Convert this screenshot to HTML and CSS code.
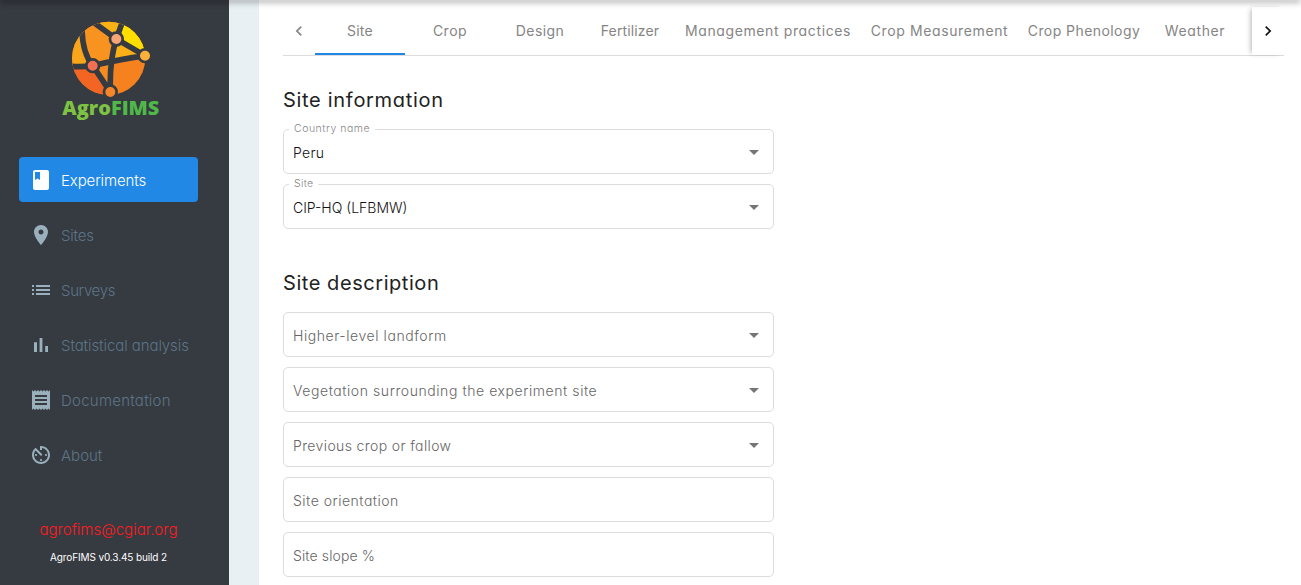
FILE: index.html
```html
<!DOCTYPE html>
<html lang="en">
<head>
<meta charset="utf-8">
<title>AgroFIMS</title>
<link rel="stylesheet" href="styles.css">
</head>
<body>
<div class="topbar-shadow"></div>
<div class="app">
  <aside class="sidebar">
    <svg class="logo" viewBox="0 0 360 345" width="120" height="115">
      <defs><clipPath id="globe"><circle cx="176" cy="145" r="110"/></clipPath></defs>
      <g clip-path="url(#globe)">
        <rect width="360" height="345" fill="#f5821f"/>
        <path d="M128 167L90 60L128 30L199 87L181 156Z" fill="#f7931e"/>
        <path d="M128 30L199 87L222 20Z" fill="#f9b215"/>
        <path d="M199 87L222 20L320 30L285 137Z" fill="#ffde00"/>
        <path d="M199 87L285 137L181 156Z" fill="#fbb017"/>
        <path d="M128 167L90 60L30 60V167Z" fill="#faa61a"/>
        <path d="M128 167H30V280H200L181 246Z" fill="#f26522"/>
        <path d="M128 167L181 156L181 246Z" fill="#f68b1f"/>
        <path d="M128 35L199 87L220 28M199 87L285 137Q200 150 128 167L181 246Q178 150 199 87M128 167Q98 130 96 60M128 167Q95 172 50 168" fill="none" stroke="#363a41" stroke-width="17"/>
      </g>
      <g stroke="#363a41" stroke-width="8">
        <circle cx="199" cy="87" r="19" fill="#f7a576"/>
        <circle cx="285" cy="137" r="19" fill="#fbb03b"/>
        <circle cx="128" cy="167" r="19" fill="#f26f52"/>
        <circle cx="181" cy="246" r="19" fill="#f5862a"/>
      </g>
      <text class="logo-text" x="37" y="314" textLength="291" lengthAdjust="spacingAndGlyphs"><tspan fill="#7dc242">Agro</tspan><tspan fill="#50b848">FIMS</tspan></text>
    </svg>
    <nav class="menu">
      <a class="item active"><svg viewBox="0 0 24 24"><path d="M18 2H6c-1.100 0-2 .9-2 2v16c0 1.100.9 2 2 2h12c1.100 0 2-.9 2-2V4c0-1.100-.9-2-2-2zM6 4h5v8l-2.500-1.500L6 12V4z"/></svg><span class="w-exp">Experiments</span></a>
      <a class="item"><svg viewBox="0 0 24 24"><path d="M12 2C8.130 2 5 5.130 5 9c0 5.250 7 13 7 13s7-7.750 7-13c0-3.870-3.130-7-7-7zm0 9.500c-1.380 0-2.500-1.120-2.500-2.500s1.120-2.500 2.500-2.500 2.500 1.120 2.500 2.500-1.120 2.500-2.500 2.500z"/></svg><span class="w-sites">Sites</span></a>
      <a class="item"><svg viewBox="0 0 24 24"><path d="M3 13h2v-2H3v2zm0 4h2v-2H3v2zm0-8h2V7H3v2zm4 4h14v-2H7v2zm0 4h14v-2H7v2zM7 7v2h14V7H7z"/></svg><span class="w-surveys">Surveys</span></a>
      <a class="item"><svg viewBox="0 0 24 24"><path d="M5 9.200h3V19H5zM10.600 5h2.800v14h-2.800zm5.600 8H19v6h-2.800z"/></svg><span class="w-stat">Statistical analysis</span></a>
      <a class="item"><svg viewBox="0 0 24 24"><path d="M18 17H6v-2h12v2zm0-4H6v-2h12v2zm0-4H6V7h12v2zM3 22l1.500-1.500L6 22l1.500-1.500L9 22l1.500-1.500L12 22l1.500-1.500L15 22l1.500-1.500L18 22l1.500-1.500L21 22V2l-1.500 1.500L18 2l-1.500 1.500L15 2l-1.500 1.500L12 2l-1.500 1.500L9 2 7.500 3.500 6 2 4.500 3.500 3 2v20z"/></svg><span class="w-doc">Documentation</span></a>
      <a class="item"><svg viewBox="0 0 24 24"><path d="M11 17c0 .55.45 1 1 1s1-.45 1-1-.45-1-1-1-1 .45-1 1zm0-14v4h2V5.080c3.390.49 6 3.390 6 6.920 0 3.870-3.130 7-7 7s-7-3.130-7-7c0-1.680.59-3.220 1.580-4.420L12 13l1.410-1.410-6.800-6.800v.02C4.420 6.450 3 9.050 3 12c0 4.970 4.020 9 9 9 4.970 0 9-4.030 9-9s-4.030-9-9-9h-1zm7 9c0-.55-.45-1-1-1s-1 .45-1 1 .45 1 1 1 1-.45 1-1zM6 12c0 .55.45 1 1 1s1-.45 1-1-.45-1-1-1-1 .45-1 1z"/></svg><span>About</span></a>
    </nav>
    <div class="contact">agrofims@cgiar.org</div>
    <div class="version">AgroFIMS v0.3.45 build 2</div>
  </aside>
  <main class="content">
    <div class="tabs">
      <button class="arrow"><svg viewBox="0 0 24 24"><path d="M15.400 7.400L14 6l-6 6 6 6 1.400-1.400L10.800 12z"/></svg></button>
      <div class="tab selected">Site</div>
      <div class="tab t-crop">Crop</div>
      <div class="tab t-design">Design</div>
      <div class="tab t-fert">Fertilizer</div>
      <div class="tab t-mgmt">Management practices</div>
      <div class="tab t-meas">Crop Measurement</div>
      <div class="tab t-phen">Crop Phenology</div>
      <div class="tab t-weather">Weather</div>
      <button class="arrow next"><svg viewBox="0 0 24 24"><path d="M8.600 16.600L13.200 12 8.600 7.400 10 6l6 6-6 6z"/></svg></button>
    </div>
    <h2 class="h-info">Site information</h2>
    <div class="fields">
      <div class="field"><label class="l-country">Country name</label><span class="value v-peru">Peru</span><i class="caret"></i></div>
      <div class="field"><label class="l-site">Site</label><span class="value">CIP-HQ (LFBMW)</span><i class="caret"></i></div>
    </div>
    <h2 class="h-desc">Site description</h2>
    <div class="fields">
      <div class="field"><span class="hint">Higher-level landform</span><i class="caret"></i></div>
      <div class="field"><span class="hint">Vegetation surrounding the experiment site</span><i class="caret"></i></div>
      <div class="field"><span class="hint n-prev">Previous crop or fallow</span><i class="caret"></i></div>
      <div class="field"><span class="hint n-orient">Site orientation</span></div>
      <div class="field"><span class="hint n-slope">Site slope %</span></div>
    </div>
  </main>
</div>
</body>
</html>
```

FILE: styles.css
```css
* { box-sizing: border-box; }
body {
  margin: 0;
  height: 585px;
  overflow: hidden;
  background: #fff;
  font-family: Inter, "Open Sans", sans-serif;
  font-feature-settings: "cv11";
  font-weight: 300;
  font-size: 14px;
}
.app { display: flex; height: 585px; }
.topbar-shadow {
  position: absolute;
  top: -4px; left: 0; right: 0;
  height: 4px;
  box-shadow: 0 2px 4px -1px rgba(0,0,0,.2), 0 4px 5px rgba(0,0,0,.14), 0 1px 10px rgba(0,0,0,.12);
  z-index: 5;
}

/* Sidebar */
.sidebar { flex: none; width: 229px; background: #363a41; display: flex; flex-direction: column; }
.logo { display: block; margin: 10px 0 0 50px; }
.logo-text { font: 800 57px "Open Sans", sans-serif; }
.menu { display: flex; flex-direction: column; gap: 10px; margin: 32px 31px 0 19px; }
.item { display: flex; align-items: center; height: 45px; padding-left: 10px; gap: 8px; border-radius: 4px; color: #5c7586; font-size: 15px; }
.item span { padding-top: 1px; }
.item svg { width: 24px; height: 24px; fill: #9ab0bc; }
.item.active { background: #2188e6; color: #fff; }
.item.active svg { fill: #fff; }
.w-exp { letter-spacing: -.12px; }
.w-sites { letter-spacing: -.2px; }
.w-surveys { letter-spacing: -.35px; }
.w-stat { letter-spacing: -.08px; }
.w-doc { letter-spacing: .25px; }
.contact { margin-top: 43px; line-height: 20px; text-align: center; color: #ff1a20; font-size: 15px; padding-right: 12px; }
.version { margin-top: 8px; line-height: 18px; text-align: center; color: #fff; font-size: 10px; font-weight: 400; letter-spacing: -.12px; padding-right: 12px; }

/* Content */
.content { flex: 1; min-width: 0; border-left: 30px solid #e9f0f4; padding: 7px 17px 0 24px; }
.tabs { display: flex; height: 49px; border-bottom: 1px solid #dcdcdc; }
.arrow { display: flex; align-items: center; justify-content: center; width: 32px; padding: 0; border: 0; background: #fff; }
.arrow svg { width: 20px; height: 20px; fill: #858585; }
.arrow.next { margin-left: auto; box-shadow: -3px 0 5px -2px rgba(0,0,0,.3); }
.arrow.next svg { fill: #111; }
.tab { display: flex; align-items: center; justify-content: center; width: 90px; padding-bottom: 2px; color: #858585; font-weight: 400; white-space: nowrap; }
.tab.selected { border-bottom: 2px solid #2188e6; padding-bottom: 0; letter-spacing: .25px; }
.t-crop { letter-spacing: .5px; }
.t-design { letter-spacing: .4px; }
.t-fert { letter-spacing: .15px; }
.t-mgmt { width: 186px; letter-spacing: .62px; }
.t-meas { width: 157px; letter-spacing: .61px; }
.t-phen { width: 132px; letter-spacing: .43px; }
.t-weather { letter-spacing: .6px; }
h2 { margin: 0; font-size: 20px; font-weight: 400; line-height: 30px; color: #222; }
.h-info { margin-top: 29px; letter-spacing: .7px; }
.h-desc { margin-top: 39px; letter-spacing: .56px; }
.fields { display: flex; flex-direction: column; gap: 10px; width: 491px; margin-top: 14px; }
.field { position: relative; display: flex; align-items: center; justify-content: space-between; height: 45px; padding: 1px 14px 0 9px; border: 1px solid #dcdcdc; border-radius: 5px; }
.field label { position: absolute; left: 5px; top: -9px; padding: 0 5px; background: #fff; color: #858585; font-size: 10.5px; line-height: 16px; }
.l-country { letter-spacing: .52px; }
.l-site { letter-spacing: .3px; }
.value { color: #111; }
.v-peru { letter-spacing: .3px; }
.hint { color: #666; letter-spacing: .57px; }
.n-prev { letter-spacing: .38px; }
.n-orient { letter-spacing: .5px; }
.n-slope { letter-spacing: .12px; }
.caret { border: 5px solid transparent; border-top-color: #757575; border-bottom: 0; }
```
